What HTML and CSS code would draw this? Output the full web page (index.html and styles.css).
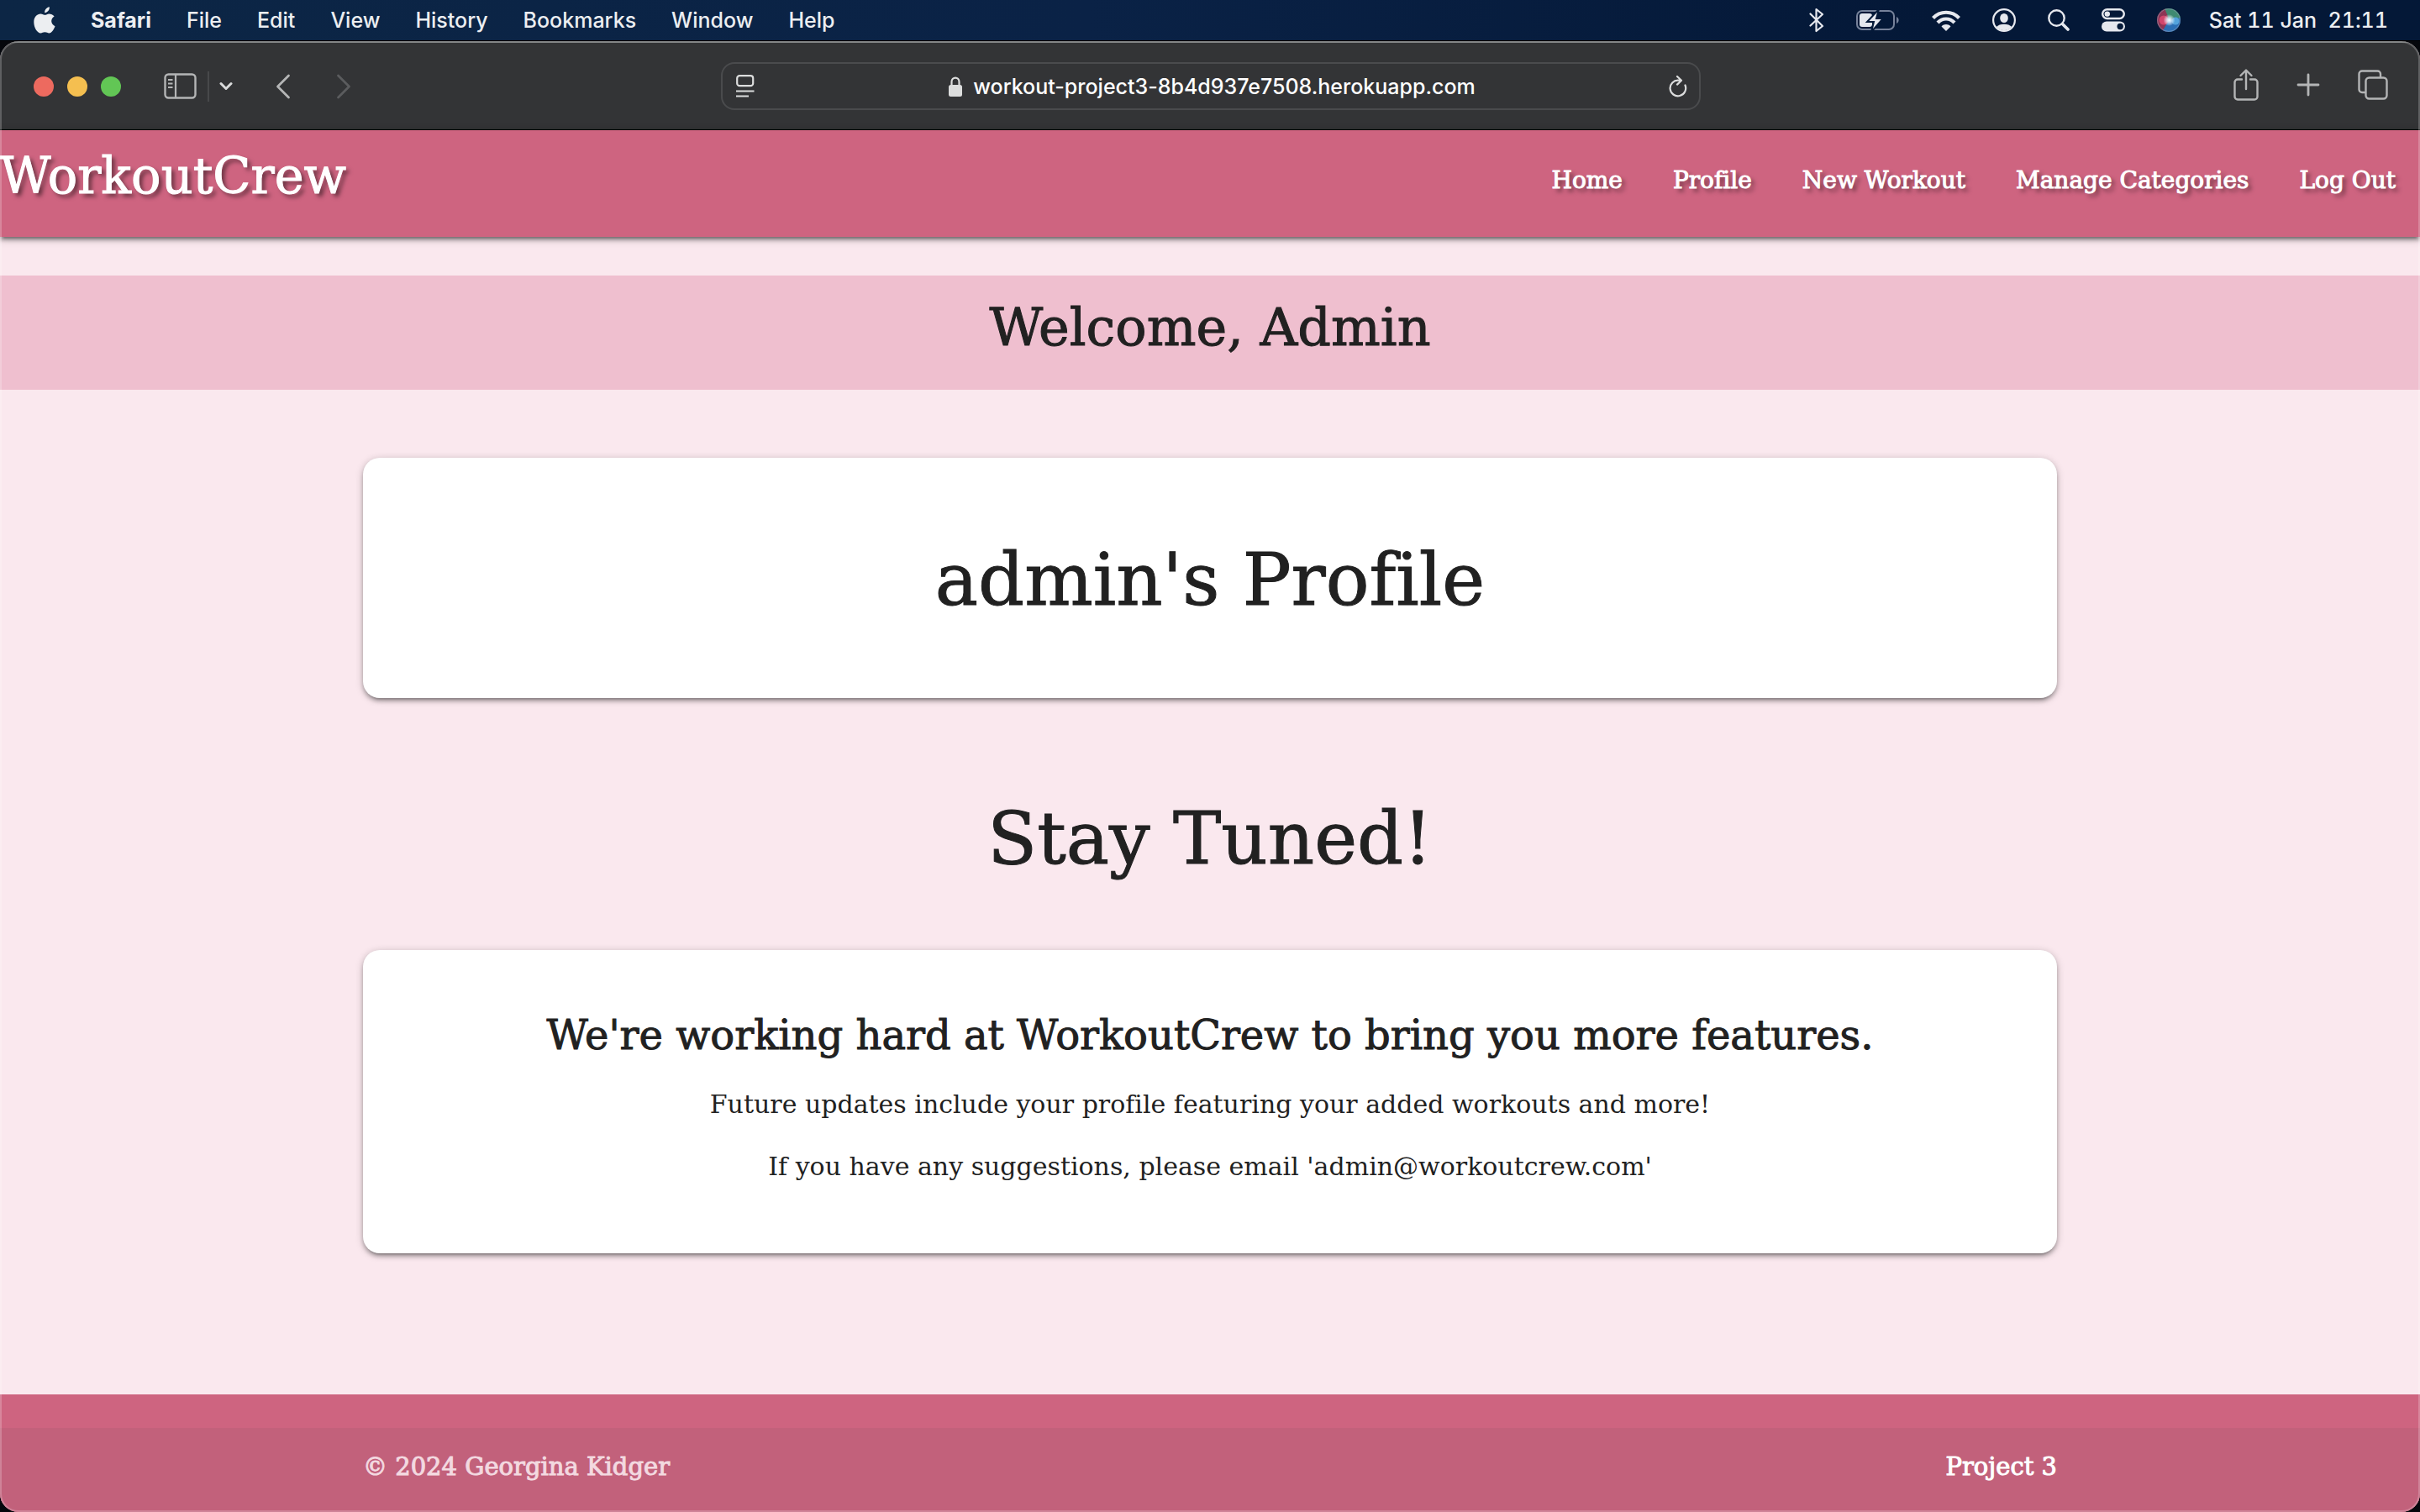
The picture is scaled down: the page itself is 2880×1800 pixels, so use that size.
FILE: index.html
```html
<!DOCTYPE html>
<html lang="en">
<head>
<meta charset="utf-8">
<meta name="viewport" content="width=device-width, initial-scale=1">
<title>WorkoutCrew</title>
<link rel="stylesheet" href="styles.css">
</head>
<body>
<div class="desktop">
  <header class="menubar">
    <nav class="menus" aria-label="System menu">
      <button aria-label="Apple"><svg width="26" height="34" viewBox="0 0 26 34"><path d="M13.200 8.200C13 4.500 15.700 1.800 18.800 1.300c.5 3.500-2.400 6.800-5.600 6.900zM18.400 9.400c2.200 0 4.700 1.100 6.200 3.200-5 3-4.200 9.300.9 11.600-1.300 3.600-4 8.300-7 8.300-1.900 0-2.700-1.200-5.100-1.200-2.400 0-3.200 1.200-5.100 1.200C4.500 32.500.3 26.200.3 19.300c0-6.500 4-9.900 8-9.900 2.200 0 3.900 1.400 5.300 1.400 1.300 0 2.800-1.400 4.800-1.400z" fill="#eceef1"/></svg></button>
      <button class="app-name">Safari</button>
      <button>File</button>
      <button>Edit</button>
      <button>View</button>
      <button>History</button>
      <button>Bookmarks</button>
      <button>Window</button>
      <button>Help</button>
    </nav>
    <div class="status">
      <div class="status-icons">
        <svg width="18" height="30" viewBox="0 0 18 30"><path d="M1.500 7.500L16 22l-7.500 6V2L16 8 1.500 21.500" fill="none" stroke="#e6e8ee" stroke-width="2.200" stroke-linejoin="round" stroke-linecap="round"/></svg>
        <svg width="52" height="26" viewBox="0 0 52 26"><rect x="1" y="2" width="44" height="22" rx="6" fill="none" stroke="#76829a" stroke-width="2"/><path d="M48 9v8c3.500-1.500 3.500-6.500 0-8z" fill="#76829a"/><rect x="4" y="5" width="15" height="16" rx="3" fill="#e6e8ee"/><path d="M27 0L13 15h8l-3 12L32 11h-8z" fill="#e6e8ee" stroke="#051a39" stroke-width="2"/></svg>
        <svg width="34" height="26" viewBox="0 0 34 26"><g fill="none" stroke="#e6e8ee" stroke-width="4.200"><path d="M1.500 10.500c8.500-9 22.500-9 31 0"/><path d="M7 16c5.500-6 14.500-6 20 0"/></g><path d="M11.500 20.500c3-3.200 8-3.200 11 0L17 26z" fill="#e6e8ee"/></svg>
        <svg width="28" height="28" viewBox="0 0 28 28"><circle cx="14" cy="14" r="12.900" fill="none" stroke="#e6e8ee" stroke-width="2.200"/><ellipse cx="14" cy="11.500" rx="4.800" ry="5.500" fill="#e6e8ee"/><path d="M5 22c3-4.500 15-4.500 18 0-4.500 5.500-13.500 5.500-18 0z" fill="#e6e8ee"/></svg>
        <svg width="26" height="26" viewBox="0 0 26 26"><circle cx="10.500" cy="10.500" r="9.200" fill="none" stroke="#e6e8ee" stroke-width="2.400"/><path d="M17.500 17.500l6.500 6.500" stroke="#e6e8ee" stroke-width="3.600" stroke-linecap="round"/></svg>
        <svg width="28" height="28" viewBox="0 0 28 28"><rect x="1.200" y="1.200" width="25.600" height="10.800" rx="5.400" fill="none" stroke="#e6e8ee" stroke-width="2.400"/><circle cx="6.800" cy="6.600" r="3.200" fill="#e6e8ee"/><rect y="15.500" width="28" height="12" rx="6" fill="#e6e8ee"/><circle cx="22.200" cy="21.500" r="3.700" fill="#051a39"/></svg>
        <svg width="28" height="28" viewBox="0 0 28 28"><defs><radialGradient id="glow"><stop offset="0" stop-color="#fff"/><stop offset=".35" stop-color="#dff2ff" stop-opacity=".85"/><stop offset="1" stop-color="#fff" stop-opacity="0"/></radialGradient><clipPath id="orb"><circle cx="14" cy="14" r="14"/></clipPath></defs><g clip-path="url(#orb)"><rect width="28" height="28" fill="#3b5f78"/><path d="M0 0h14L12 28H0z" fill="#8d3555"/><path d="M9 0h19v13L14 12z" fill="#3f8a72"/><path d="M14 14l14-3v17H6z" fill="#2b6fb5"/><circle cx="8" cy="14" r="5.500" fill="#d2456c"/><circle cx="22" cy="15" r="4.500" fill="#53a3dc"/><circle cx="14.500" cy="14" r="7" fill="url(#glow)"/></g><circle cx="14" cy="14" r="13.400" fill="none" stroke="#9aa3b8" stroke-opacity=".5"/></svg>
      </div>
      <time>Sat 11 Jan&nbsp; 21:11</time>
    </div>
  </header>

  <div class="window">
    <div class="toolbar">
      <div class="tools-left">
        <div class="lights"><button class="light close" aria-label="Close"></button><button class="light minimise" aria-label="Minimise"></button><button class="light zoom" aria-label="Zoom"></button></div>
        <div class="sidebar-tools">
          <button aria-label="Sidebar"><svg width="40" height="32" viewBox="0 0 40 32"><rect x="1.500" y="1.500" width="36" height="28" rx="4" fill="none" stroke="#b4b5b6" stroke-width="2.400"/><path d="M14 2v27" stroke="#b4b5b6" stroke-width="2.200"/><path d="M5 8h5.500M5 12.500h5.500M5 17h5.500" stroke="#b4b5b6" stroke-width="1.800"/></svg></button>
          <span class="divider"></span>
          <button aria-label="Tab groups"><svg width="16" height="12" viewBox="0 0 16 12"><path d="M2 2.500l6 6 6-6" fill="none" stroke="#d9dadb" stroke-width="3" stroke-linecap="round" stroke-linejoin="round"/></svg></button>
        </div>
        <div class="history-tools">
          <button aria-label="Back"><svg width="18" height="32" viewBox="0 0 18 32"><path d="M15.500 3L2.500 16l13 13" fill="none" stroke="#b4b5b6" stroke-width="2.800" stroke-linecap="round" stroke-linejoin="round"/></svg></button>
          <button aria-label="Forward"><svg width="18" height="32" viewBox="0 0 18 32"><path d="M2.500 3l13 13-13 13" fill="none" stroke="#5b5c5e" stroke-width="2.800" stroke-linecap="round" stroke-linejoin="round"/></svg></button>
        </div>
      </div>
      <div class="address">
        <button aria-label="Page menu"><svg width="22" height="28" viewBox="0 0 22 28"><rect x="1.200" y="1.200" width="19" height="12" rx="3" fill="none" stroke="#dcdddd" stroke-width="2.200"/><path d="M0 19.500h21.500M0 25.500h15" stroke="#dcdddd" stroke-width="2.200"/></svg></button>
        <button class="url"><svg width="18" height="24" viewBox="0 0 18 24"><path d="M4.500 11V6.500c0-6.500 9-6.500 9 0V11" fill="none" stroke="#dcdddd" stroke-width="2.200"/><rect x="1" y="10" width="16" height="14" rx="2.500" fill="#dcdddd"/></svg>workout-project3-8b4d937e7508.herokuapp.com</button>
        <button aria-label="Reload"><svg width="22" height="26" viewBox="0 0 22 26"><path d="M19.500 11.500a9.300 9.300 0 1 1-8-5.800h2.500M10 1l5 4.800-5 4.800" fill="none" stroke="#dcdddd" stroke-width="2.200" stroke-linecap="round" stroke-linejoin="round"/></svg></button>
      </div>
      <div class="tools-right">
        <button aria-label="Share"><svg width="30" height="40" viewBox="0 0 30 40"><path d="M10 13.500H5A3.500 3.500 0 0 0 1.500 17v17A3.500 3.500 0 0 0 5 37.500h20a3.500 3.500 0 0 0 3.500-3.500V17a3.500 3.500 0 0 0-3.500-3.500h-5M15 25V3M8.500 9L15 2.500 21.500 9" fill="none" stroke="#b4b5b6" stroke-width="2.400" stroke-linecap="round" stroke-linejoin="round"/></svg></button>
        <button aria-label="New tab"><svg width="28" height="28" viewBox="0 0 28 28"><path d="M14 2v24M2 14h24" stroke="#b4b5b6" stroke-width="2.800" stroke-linecap="round"/></svg></button>
        <button aria-label="Tab overview"><svg width="36" height="36" viewBox="0 0 36 36"><path d="M9.500 27H5a3.500 3.500 0 0 1-3.500-3.500V5A3.500 3.500 0 0 1 5 1.500h18.500A3.500 3.500 0 0 1 27 5v4" fill="none" stroke="#b4b5b6" stroke-width="2.400"/><rect x="9.500" y="9.500" width="25" height="25" rx="4" fill="none" stroke="#b4b5b6" stroke-width="2.400"/></svg></button>
      </div>
    </div>

    <div class="page">
      <header class="site-header">
        <a class="brand" href="#">WorkoutCrew</a>
        <nav class="site-nav"><a href="#">Home</a><a href="#">Profile</a><a href="#">New Workout</a><a href="#">Manage Categories</a><a href="#">Log Out</a></nav>
      </header>
      <main>
        <h2 class="welcome">Welcome, Admin</h2>
        <div class="container">
          <section class="card profile"><h1>admin's Profile</h1></section>
          <h1 class="stay-tuned">Stay Tuned!</h1>
          <section class="card news">
            <h3>We're working hard at WorkoutCrew to bring you more features.</h3>
            <p>Future updates include your profile featuring your added workouts and more!</p>
            <p>If you have any suggestions, please email 'admin@workoutcrew.com'</p>
          </section>
        </div>
      </main>
      <footer class="site-footer">
        <div class="copyright"><div class="container footer-row"><span>© 2024 Georgina Kidger</span><a href="#">Project 3</a></div></div>
      </footer>
    </div>
  </div>
</div>
</body>
</html>
```
FILE: styles.css
```css
* { box-sizing: border-box; }

body {
  margin: 0;
  background: #05070c;
  font-family: "Special Elite", "DejaVu Serif", serif;
  font-size: 30px;
  line-height: 44px;
  font-variant-ligatures: none;
}

h1, h2, h3, p { margin: 0; font-weight: 400; text-align: center; }
a { color: inherit; text-decoration: none; }
svg { display: block; flex: none; }
button {
  margin: 0;
  padding: 0;
  border: 0;
  background: none;
  color: inherit;
  font: inherit;
}

.desktop { display: flex; flex-direction: column; min-height: 100vh; }

/* System menu bar */
.menubar {
  display: flex;
  justify-content: space-between;
  align-items: center;
  height: 49px;
  padding: 0 38px 0 40px;
  border-bottom: 1px solid #000;
  background: linear-gradient(90deg, #0c2645, #0a2246 45%, #041837 80%);
  color: #eceef1;
  font-family: Inter, sans-serif;
  font-size: 25px;
  font-weight: 500;
  line-height: 32px;
}
.menus { display: flex; align-items: center; gap: 42px; }
.app-name { font-weight: 700; }
.status { display: flex; align-items: center; gap: 34px; }
.status-icons { display: flex; align-items: center; gap: 38px; }
.status time { font-variant-numeric: tabular-nums; }

/* Browser window */
.window {
  position: relative;
  display: flex;
  flex: 1;
  flex-direction: column;
  overflow: hidden;
  border-radius: 22px;
  background: #fae8ee;
}
.window::after {
  content: "";
  position: absolute;
  inset: 0;
  border: 2px solid rgba(255, 255, 255, .22);
  border-radius: 22px;
  pointer-events: none;
}
.toolbar {
  display: grid;
  grid-template-columns: 1fr 1166px 1fr;
  align-items: center;
  height: 106px;
  padding: 0 38px 0 40px;
  border-top: 2px solid #626466;
  border-bottom: 1px solid #000;
  background: #333436;
  color: #fff;
  font-family: Inter, sans-serif;
  font-size: 25px;
  font-weight: 500;
}
.tools-left, .lights, .sidebar-tools, .history-tools, .tools-right { display: flex; align-items: center; }
.tools-left { gap: 51px; }
.lights { gap: 16px; }
.light { width: 24px; height: 24px; border-radius: 50%; }
.close { background: #ed6a5f; }
.minimise { background: #f5bf50; }
.zoom { background: #62c655; }
.sidebar-tools { gap: 12px; }
.divider { width: 2px; height: 36px; background: #48494b; }
.history-tools { gap: 54px; }
.tools-right { justify-content: flex-end; gap: 45px; padding-bottom: 3px; }
.address {
  display: flex;
  align-items: center;
  justify-content: space-between;
  height: 57px;
  padding: 0 14px 0 16px;
  border: 2px solid #4a4b4d;
  border-radius: 16px;
}
.url { display: flex; align-items: center; gap: 12px; }

/* Site */
.page { display: flex; flex: 1; flex-direction: column; color: #212121; }
.site-header {
  display: flex;
  justify-content: space-between;
  align-items: flex-start;
  height: 127px;
  padding-right: 29px;
  background: #ce6480;
  box-shadow: 0 4px 4px rgba(0, 0, 0, .24), 0 6px 2px -4px rgba(0, 0, 0, .2), 0 2px 10px rgba(0, 0, 0, .3);
  color: #fff;
  text-shadow: 4px 4px 5px rgba(0, 0, 0, .5);
}
.brand, .site-nav, h1, h2, h3, .footer-row { -webkit-text-stroke: 1px currentColor; }
.brand { font-size: 59px; line-height: 110px; }
.site-nav { display: flex; gap: 60px; font-size: 28px; line-height: 120px; }
.welcome {
  margin-top: 46px;
  padding: 28px 0 40px;
  background: #efbfcf;
  font-size: 62px;
  line-height: 68px;
}
.container { width: 70%; margin: 0 auto; }
.card {
  border-radius: 20px;
  background: #fff;
  box-shadow: 0 4px 4px rgba(0, 0, 0, .2), 0 6px 2px -4px rgba(0, 0, 0, .16), 0 2px 10px rgba(0, 0, 0, .24);
}
.profile { margin-top: 81px; padding: 98px 40px 94px; }
h1 { font-size: 86px; line-height: 94px; }
.stay-tuned { margin: 120px 0 86px; }
.news { padding: 74px 40px 81px; }
h3 { font-size: 48px; line-height: 54px; margin-bottom: 34px; }
p + p { margin-top: 30px; }

.site-footer { margin-top: auto; padding-top: 40px; background: #ce6480; }
.copyright { padding: 24px 0 32px; background: #c2617b; }
.footer-row { display: flex; justify-content: space-between; color: #f3d9e0; font-size: 29px; }
.footer-row a { color: #fff; }
```
